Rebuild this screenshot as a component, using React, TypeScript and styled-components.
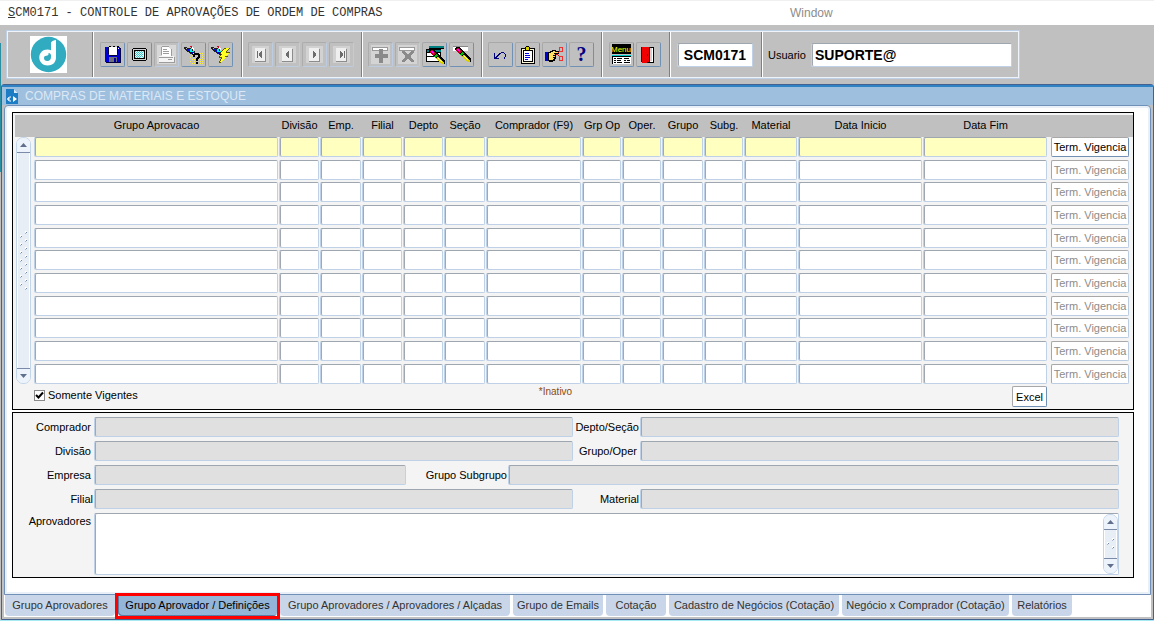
import React from "react";
import styled, { createGlobalStyle } from "styled-components";

const GlobalStyle = createGlobalStyle`
  * { box-sizing: border-box; }
  body {
    margin: 0;
    background: #a6e9f1;
    font-family: "Liberation Sans", Arial, sans-serif;
    font-size: 11px;
    color: #000;
  }
  input, button, textarea { font: inherit; color: inherit; margin: 0; }
`;

const MenuBar = styled.header`
  display: grid;
  grid-template-columns: 782fr 364fr;
  align-items: center;
  height: 25px;
  padding-left: 8px;
  border-top: 1px solid #f0f0f0;
  background: #fff;
`;

const AppTitle = styled.h1`
  margin: 0;
  font: 12px/16px "Liberation Mono", "Courier New", monospace;
  color: #333;
  white-space: nowrap;
`;

const MenuButton = styled.button`
  justify-self: start;
  border: 0;
  padding: 0;
  background: none;
  font-size: 12px;
  line-height: 16px;
  color: #8c8c8c;
`;

const Desktop = styled.main`
  padding: 5px 0 0 1px;
  background: linear-gradient(#2b8fa3, #2b8fa3) 0 18px / 1px 129px no-repeat, #c0c0c0;
`;

const Toolbar = styled.div`
  display: flex;
  width: max-content;
  height: 49px;
  margin: 0 0 5px 5px;
  border: 1px solid #bdd0e6;
  box-shadow: inset 0 0 0 1px #eef4fa;
`;

const Group = styled.div<{ $pad: number }>`
  display: flex;
  align-items: center;
  gap: 2px;
  margin: 1px 0;
  padding: 0 ${(p) => p.$pad + 1}px 0 ${(p) => p.$pad}px;
  border-left: 1px solid #808080;
  box-shadow: inset 1px 0 #fff;
`;

const LogoCell = styled.div`
  display: flex;
  align-items: center;
  padding: 0 25px 0 23px;
`;

const Tool = styled.button`
  display: flex;
  align-items: center;
  justify-content: center;
  width: 25px;
  height: 25px;
  padding: 0;
  border: 1px solid;
  border-color: #a8a8a8 #7090b4 #7090b4 #a8a8a8;
  border-radius: 2px;
  background: #c0c0c0;
  &:disabled { border-color: #acacac #bccde2 #bccde2 #acacac; }
  svg { display: block; flex: none; }
`;

const field = `
  border: 1px solid #bfd1e7;
  border-top-color: #9ea6b0;
  border-radius: 2px;
  box-shadow: inset 1px 0 #a2a8b2;
  outline: 0;
`;

const BarInput = styled.input<{ $w: number; $center?: boolean }>`
  ${field}
  width: ${(p) => p.$w}px;
  height: 24px;
  padding: 0 3px;
  background: #fff;
  font-size: 14px;
  font-weight: bold;
  text-align: ${(p) => (p.$center ? "center" : "left")};
`;

const UserLabel = styled.label`
  width: 41px;
`;

const Frame = styled.section`
  border: 1px solid #44618f;
  border-radius: 3px 3px 0 0;
  padding: 0 2px 2px;
  background: #c0c0c0;
`;

const FrameTitle = styled.div`
  display: flex;
  align-items: center;
  gap: 6px;
  height: 20px;
  margin: 0 -2px;
  padding-left: 4px;
  border-top: 2px solid #2f82c4;
  background: #9fbfdf;
  h2 {
    margin: 0;
    font-size: 12px;
    line-height: 16px;
    font-weight: normal;
    color: #dbe8f5;
  }
`;

const Canvas = styled.div`
  display: grid;
  gap: 2px;
  padding: 6px 16px 16px 7px;
  border: 1px solid #7090b8;
  border-radius: 4px 4px 0 0;
  box-shadow: inset 0 0 0 2px #e9f0f7;
  background: #fff;
`;

const Panel = styled.section`
  min-width: 0;
  border: 1px solid #000;
  background: #f4f4f4;
`;

const GridPanel = styled(Panel)`
  padding: 2px 0 0 2px;
`;

const GridTable = styled.table`
  width: 100%;
  table-layout: fixed;
  border-collapse: collapse;
  th {
    height: 22px;
    padding: 0 0 2px;
    background: #c0c0c0;
    font-weight: normal;
    white-space: nowrap;
  }
  tbody tr { height: 23px; }
  tbody tr:nth-child(3n + 2) { height: 22px; }
  td { padding: 0 1px 0 0; vertical-align: top; }
`;

const CellInput = styled.input<{ $active: boolean }>`
  ${field}
  display: block;
  width: 100%;
  height: 20px;
  padding: 0 3px;
  background: ${(p) => (p.$active ? "#ffffc0" : "#fff")};
`;

const PushButton = styled.button`
  display: block;
  height: 20px;
  padding: 0;
  border: 1px solid;
  border-color: #a8a8a8 #7090b4 #7090b4 #a8a8a8;
  border-radius: 2px;
  background: #fff;
  white-space: nowrap;
  &:disabled { color: #8c8c8c; border-color: #a8a8a8 #bccde2 #bccde2 #a8a8a8; }
`;

const TermButton = styled(PushButton)`
  width: 78px;
  margin-left: 3px;
`;

const ExcelButton = styled(PushButton)`
  justify-self: end;
  width: 35px;
  height: 21px;
`;

const Scroll = styled.div<{ $h: number }>`
  display: flex;
  flex-direction: column;
  align-items: center;
  justify-content: space-between;
  flex: none;
  width: 15px;
  height: ${(p) => p.$h}px;
  margin-left: 1px;
  border: 1px solid #c5d5e8;
  border-radius: 7px;
  background: linear-gradient(90deg, #fff 1px, #e8eef6 1px, #e8eef6 12px, #fff 12px);
  overflow: hidden;
`;

const ScrollArrow = styled.button<{ $down?: boolean }>`
  display: flex;
  align-items: center;
  justify-content: center;
  width: 13px;
  height: 15px;
  padding: 0;
  border: 0;
  ${(p) => (p.$down ? "border-top" : "border-bottom")}: 1px solid #7a8aa8;
  background: #edf3fa;
`;

const GridFooter = styled.div`
  display: grid;
  grid-template-columns: 1fr auto 1fr;
  height: 23px;
  padding: 0 86px 0 19px;
`;

const CheckLabel = styled.label`
  display: flex;
  align-items: center;
  gap: 3px;
  height: 18px;
  input {
    appearance: none;
    width: 11px;
    height: 11px;
    border: 1px solid #8a8a8a;
    background: #fff;
  }
  input:checked {
    background: #fff url("data:image/svg+xml,%3Csvg xmlns='http://www.w3.org/2000/svg' viewBox='0 0 9 9'%3E%3Cpath d='M1 4l2.500 2.500L8 1.500' fill='none' stroke='%23000' stroke-width='2'/%3E%3C/svg%3E") center / 9px 9px no-repeat;
  }
`;

const Note = styled.span`
  padding-left: 30px;
  font-size: 10px;
  line-height: 12px;
  color: #8a4a10;
`;

const Details = styled(Panel)`
  display: grid;
  gap: 4px;
  padding: 4px 14px 2px 0;
`;

const Row = styled.div`
  display: flex;
`;

const Label = styled.label<{ $w: number; $tight?: boolean }>`
  flex: none;
  width: ${(p) => p.$w}px;
  padding-right: ${(p) => (p.$tight ? 1 : 3)}px;
  text-align: right;
  line-height: 20px;
  white-space: nowrap;
`;

const AreaLabel = styled(Label)`
  line-height: 16px;
`;

const ReadField = styled.input<{ $grow: number }>`
  ${field}
  flex: ${(p) => `${p.$grow} 1 ${p.$grow}px`};
  min-width: 0;
  height: 20px;
  background: #e0e0e0;
`;

const AreaBox = styled.div`
  ${field}
  display: flex;
  flex: 1;
  min-width: 0;
  height: 62px;
  background: #fff;
`;

const Area = styled.textarea`
  flex: 1;
  min-width: 0;
  border: 0;
  outline: 0;
  resize: none;
  background: transparent;
`;

const TabBar = styled.div`
  display: flex;
  gap: 3px;
  height: 22px;
  padding-left: 1px;
  background: #fff;
`;

const Tab = styled.button<{ $w: number; $on: boolean }>`
  position: relative;
  flex: 0 1 ${(p) => p.$w}px;
  height: 21px;
  padding: 0 0 2px;
  border: 0;
  border-radius: 0 0 4px 4px;
  background: ${(p) => (p.$on ? "#93b5d8" : "#c9d6e9")};
  color: ${(p) => (p.$on ? "#000" : "#333")};
  box-shadow: ${(p) => (p.$on ? "inset 1px -1px #5c7ca6" : "none")};
  white-space: nowrap;
  &::after {
    content: "";
    display: ${(p) => (p.$on ? "block" : "none")};
    position: absolute;
    inset: -2px -3px -3px;
    border: 3px solid #f00;
  }
`;

const Svg = ({ w = 19, h = 19, children }: { w?: number; h?: number; children: React.ReactNode }) => (
  <svg width={w} height={h} viewBox={`0 0 ${w} ${h}`} shapeRendering="crispEdges" aria-hidden="true">
    {children}
  </svg>
);

const HelpMark = styled.span`
  font: bold 20px/23px "Liberation Serif", "Times New Roman", serif;
  color: #000080;
`;

const Logo = () => (
  <svg width="37" height="37" viewBox="0 0 37 37" role="img" aria-label="Logo">
    <rect width="37" height="37" fill="#fff" />
    <circle cx="18.500" cy="18.500" r="17.700" fill="#30abc0" />
    <path d="M21 6.500c1-1.600 3-2.500 5-2.500v17.500c0 5-3.500 8-8.300 8S9.300 26 9.300 21.500s3.500-8 8-8c1.500 0 2.700.3 3.700.8z" fill="#fff" />
    <path d="M18.500 17c1.500 0 2.500 1 2.500 2.500v1.500c0 2.500-1.500 4-3.700 4-2 0-3.300-1.300-3.300-3 0-1.500 1-2.300 2.300-2.300 1.800 0 2.500-1 2.200-2.700z" fill="#30abc0" />
  </svg>
);

const Torch = () => (
  <>
    <path d="M0 2h3v1h-1v1h-2zM1 4h2v-1h4v1h2v2h2v3h-1v1h-2v-1h-2v-1h-1v-1h-2v-1h-1v-1h-1z" fill="#202020" />
    <path d="M3 4h2v1h1v2h-1v-1h-1v-1h-1z" fill="#00f" />
    <path d="M6 4h2v2h2v1h-2v2h-1v-2h-1z" fill="#00f0f0" />
    <path d="M7 7h2v2h-2z" fill="#0000c8" />
    <path d="M6 1h2v2h-1v-1h-1z" fill="#e00020" />
    <path d="M8 2h1v1h1v2h-1v-1h-1zM9 8h1v1h-1z" fill="#fff" />
  </>
);

const Pencil = () => (
  <>
    <path d="M4 2h4v1h1v1h1v1h1v1h1v1h1v1h1v1h1v1h1v1h1v1h1v1h1v4h-4v-1h-1v-1h-1v-1h-1v-1h-1v-1h-1v-1h-1v-1h-1v-1h-1v-1h-1v-1h-1v-1h-1v-1h-1v-1h-1z" fill="#000" />
    <path d="M5 3h2v1h1v1h1v1h1v1h-1v1h-1v1h-1v-1h-1v-1h-1v-1h-1v-2h1z" fill="#c00020" />
    <path d="M5 4h2v1h1v2h-1v-1h-1v-1h-1z" fill="#f0f" />
    <path d="M10 7h1v1h1v1h-1v1h-1v1h-1v-1h-1v-1h1v-1h1z" fill="#00c000" />
    <path d="M12 10h1v1h1v1h1v1h1v1h1v1h1v2h-3v-1h-1v-1h-1v-1h-1v-1h-1v-1h-1v-1h1v-1h1z" fill="#d8d000" />
    <path d="M12 11h1v1h1v1h1v1h1v1h-1v-1h-1v-1h-1v-1h-1z" fill="#ffff90" />
  </>
);

const icons: Record<string, React.ReactNode> = {
  Salvar: (
    <Svg w={16} h={17}>
      <path d="M0 1h15v1h1v15h-15v-1h-1z" fill="#0000d8" />
      <path d="M4 1h8v8h-8z" fill="#fff" />
      <path d="M3 1h1v7h-1zM12 1h1v7h-1zM4 9h8v1h-8zM15 2h1v15h-15v-1h14z" fill="#000040" />
      <path d="M4 0h2v1h-2zM8 0h2v1h-2zM12 0h2v1h-2z" fill="#000" />
      <path d="M4 11h8v5h-8z" fill="#707078" />
      <path d="M9 12h2v4h-2z" fill="#0000a0" />
      <path d="M13 2h1v1h-1z" fill="#fff" />
    </Svg>
  ),
  Tela: (
    <Svg w={15} h={13}>
      <path d="M1 0h13v1h1v11h-1v1h-13v-1h-1v-11h1z" fill="#000" />
      <path d="M1 1h13v11h-13z" fill="#d0d0d0" />
      <path d="M2 2h11v9h-11z" fill="#000" />
      <path d="M3 3h9v7h-9z" fill="#d8ffff" />
      <path d="M3 3h1v1h-1zM5 3h1v1h-1zM7 3h1v1h-1zM9 3h1v1h-1zM11 3h1v1h-1zM4 4h1v1h-1zM6 4h1v1h-1zM8 4h1v1h-1zM10 4h1v1h-1zM3 5h1v1h-1zM5 5h1v1h-1zM7 5h1v1h-1zM9 5h1v1h-1zM4 6h1v1h-1zM6 6h1v1h-1zM8 6h1v1h-1zM10 6h1v1h-1zM3 7h1v1h-1zM5 7h1v1h-1zM7 7h1v1h-1zM9 7h1v1h-1zM4 8h1v1h-1zM6 8h1v1h-1zM8 8h1v1h-1zM10 8h1v1h-1zM3 9h1v1h-1zM5 9h1v1h-1zM7 9h1v1h-1zM11 9h1v1h-1z" fill="#4cc4c4" />
    </Svg>
  ),
  Imprimir: (
    <Svg>
      <rect width="19" height="19" fill="#d8d8d8" />
      <path d="M5 2h7v1h1v1h1v7h-9z" fill="#fff" />
      <path d="M4 2h1v8h-1zM5 1h7v1h-7zM6 4h4v1h-4zM6 6h6v1h-6zM6 8h6v1h-6zM14 4h1v7h-1z" fill="#9c9c9c" />
      <path d="M2 11h15v2h1v4h-16z" fill="#f4f4f4" />
      <path d="M2 12h14v1h-14zM2 17h16v1h-16zM11 14h4v1h-4zM17 12h1v5h-1z" fill="#9c9c9c" />
    </Svg>
  ),
  "Entrar Consulta": (
    <Svg w={20} h={20}>
      <Torch />
      <path d="M6 12h1v1h-1zM6 16h1v1h-1zM8 10h1v1h-1zM8 14h1v1h-1zM8 18h1v1h-1zM16 8h1v1h-1zM18 10h1v1h-1zM16 14h1v1h-1zM18 12h1v1h-1zM18 14h1v1h-1zM16 16h1v1h-1zM18 18h1v1h-1zM10 18h1v1h-1zM10 14h1v1h-1zM10 16h1v1h-1zM18 16h1v1h-1zM16 18h1v1h-1zM18 8h1v1h-1z" fill="#fff040" />
      <path d="M9 9h1v-1h5v1h1v4h-1v1h-1v2h-2v-3h1v-1h1v-2h-3v2h-2zM12 17h2v2h-2z" fill="#000" />
    </Svg>
  ),
  "Executar Consulta": (
    <Svg w={20} h={20}>
      <Torch />
      <path d="M15 3h4v1h-1v1h-1v1h-1v1h3v1h-1v1h-1v1h-1v1h1v1h-2v1h-1v1h-1v1h-1v1h-1v1h-1v1h-2v-2h1v-2h1v-1h-2v-2h1v-1h1v-1h-1v-1h1v-2h1v-1h1v-1h1v-1h1z" fill="#605800" />
      <path d="M15 3h3v1h-1v1h-1v1h-1v2h3v1h-1v1h-1v1h-2v1h1v1h-1v1h-1v1h-1v1h-1v1h-2v-1h1v-2h1v-2h-2v-1h1v-1h1v-1h-1v-2h1v-1h1v-1h1v-1h1z" fill="#ffff20" />
    </Svg>
  ),
  Inserir: (
    <Svg>
      <rect width="19" height="19" fill="#d4d4d4" />
      <path d="M1 2h15v3h-15z" fill="#fff" stroke="#999" />
      <path d="M8 4h4v5h5v4h-5v5h-4v-5h-4v-4h4z" fill="#8a8a8a" />
    </Svg>
  ),
  Remover: (
    <Svg>
      <rect width="19" height="19" fill="#d4d4d4" />
      <path d="M1 2h15v3h-15z" fill="#fff" stroke="#999" />
      <path d="M4 6h3v1h1v1h1v1h2v-1h1v-1h1v-1h3v2h-1v1h-1v1h-1v3h1v1h1v1h1v2h-3v-1h-1v-1h-1v-1h-2v1h-1v1h-1v1h-3v-2h1v-1h1v-1h1v-3h-1v-1h-1v-1h-1z" fill="#8a8a8a" />
    </Svg>
  ),
  "Limpar Bloco": (
    <Svg w={20} h={20}>
      <path d="M4 1h15v2h-15z" fill="#008080" />
      <path d="M4 3h15v1h-15zM1 4h15v13h-15z" fill="#000" />
      <path d="M2 5h14v2h-14z" fill="#008080" />
      <path d="M2 8h13v3h-13zM2 12h13v4h-13z" fill="#fff" />
      <g transform="translate(1 2)"><Pencil /></g>
    </Svg>
  ),
  "Limpar Registro": (
    <Svg w={20} h={20}>
      <path d="M1 2h15v4h-15z" fill="#fff" />
      <path d="M1 1h15v1h-15z" fill="#888" />
      <Pencil />
    </Svg>
  ),
  Desfazer: (
    <Svg w={15} h={12}>
      <path d="M1 4h1v4h1v-1h1v-1h1v-1h1v-1h2v-1h3v1h1v1h1v3h-1v2h-1v-2h1v-3h-1v-1h-3v1h-1v1h-1v1h-1v1h-1v1h2v1h-5z" fill="#000080" />
    </Svg>
  ),
  Colar: (
    <Svg w={17} h={18}>
      <path d="M2 2h13v15h-13z" fill="#fff8d8" stroke="#000" />
      <path d="M4 4h9v11h-9z" fill="#fff" stroke="#000" />
      <path d="M6 1h1v-1h3v1h1v3h-5z" fill="#d8d000" />
      <path d="M5 4h7v1h-7zM6 1h1v3h-1zM10 1h1v3h-1zM7 0h3v1h-3z" fill="#000" />
      <path d="M6 7h4v1h-4zM6 9h5v1h-5zM6 11h5v1h-5zM6 13h3v1h-3z" fill="#00e" />
    </Svg>
  ),
  Recortar: (
    <Svg w={19} h={17}>
      <path d="M0 6h3v9h-3z" fill="#0000d0" />
      <path d="M3 6h2v-1h2v-1h4v1h3v3h-3v5h-1v2h-2v1h-4v-1h-1z" fill="#000" />
      <path d="M4 7h2v-1h2v-1h2v1h3v1h-4v1h1v1h-2v1h2v1h-2v1h1v1h-1v1h-4z" fill="#ffe060" />
      <path d="M11 8h2v1h1v1h1v1h-1v-1h-1v-1h-2zM13 6h1v-1h1v1h-1v1h-1z" fill="#e00000" />
      <path d="M14 1h3v4h-3zM14 10h3v4h-3z" fill="none" stroke="#f03030" />
    </Svg>
  ),
  Ajuda: <HelpMark>?</HelpMark>,
  Menu: (
    <svg width="21" height="21" viewBox="0 0 21 21" shapeRendering="crispEdges" aria-hidden="true">
      <path d="M1 0h19v10h-19z" fill="#000" />
      <text x="10" y="8" textAnchor="middle" fontFamily="Liberation Sans, sans-serif" fontSize="8" fill="#ff0">Menu</text>
      <path d="M1 11h19v9h-19z" fill="#000" />
      <path d="M1 11h19v1h-19z" fill="#0cc" />
      <path d="M2 13h18v7h-18z" fill="#fff" />
      <path d="M3 14h2v1h-2zM6 14h5v1h-5zM13 14h5v1h-5zM3 16h2v1h-2zM6 16h4v1h-4zM13 16h2v1h-2zM16 16h3v1h-3zM3 18h2v1h-2zM6 18h5v1h-5zM13 18h6v1h-6z" fill="#000" />
    </svg>
  ),
  Sair: (
    <Svg w={17} h={18}>
      <path d="M3 1h10v15h-10z" fill="#fff" stroke="#000" />
      <path d="M10 2h2v13h-2z" fill="#d0d0d0" />
      <path d="M2 1h7v15h-2v1h-5z" fill="#f00000" />
      <path d="M9 2h1v14h-1zM7 8h1v2h-1zM1 1h1v15h-1z" fill="#600000" />
    </Svg>
  ),
};

const NavIcon = ({ dir, end }: { dir: "left" | "right"; end?: boolean }) => (
  <Svg w={17} h={17}>
    <rect width="17" height="17" fill="#d2d2d2" />
    <path d="M3 2h10v13h-10z" fill="#efefef" />
    <path d="M13 3h1v13h-11v-1h10z" fill="#8c8c8c" />
    <g transform={dir === "right" ? "translate(17 0) scale(-1 1)" : undefined}>
      <path d="M10 5v7h-1v-1h-1v-1h-1v-3h1v-1h1v-1z" fill="#6c6c6c" />
      {end && <path d="M5 5h1v7h-1z" fill="#6c6c6c" />}
    </g>
  </Svg>
);

const ToolButton = ({ name, disabled }: { name: string; disabled?: boolean }) => (
  <Tool type="button" aria-label={name} disabled={disabled}>{icons[name]}</Tool>
);

const Arrow = ({ down }: { down?: boolean }) => (
  <svg width="7" height="4" viewBox="0 0 7 4" aria-hidden="true">
    <path d={down ? "M0 0h7L3.500 4z" : "M0 4h7L3.500 0z"} fill="#5f6f8c" />
  </svg>
);

const Grip = ({ rows }: { rows: number }) => (
  <svg width="9" height={rows * 4} viewBox={`0 0 9 ${rows * 4}`} shapeRendering="crispEdges" aria-hidden="true">
    {Array.from({ length: rows }, (_, i) => {
      const x = i % 2 ? 1 : 6;
      return (
        <g key={i}>
          <rect x={x} y={i * 4} width="2" height="2" fill="#fff" />
          <rect x={x + 1} y={i * 4 + 1} width="1" height="1" fill="#6f88ac" />
          <rect x={x} y={i * 4 + 2} width="1" height="1" fill="#a5b8d0" />
        </g>
      );
    })}
  </svg>
);

const ScrollBar = ({ height, grips }: { height: number; grips: number }) => (
  <Scroll $h={height}>
    <ScrollArrow type="button" aria-label="Acima"><Arrow /></ScrollArrow>
    <Grip rows={grips} />
    <ScrollArrow type="button" aria-label="Abaixo" $down><Arrow down /></ScrollArrow>
  </Scroll>
);

const columns: [string, number?][] = [
  ["Grupo Aprovacao"], ["Divisão", 41], ["Emp.", 42], ["Filial", 41], ["Depto", 41], ["Seção", 42],
  ["Comprador (F9)", 96], ["Grp Op", 40], ["Oper.", 40], ["Grupo", 42], ["Subg.", 40], ["Material", 54],
  ["Data Inicio", 125], ["Data Fim", 125],
];

const tabs: [string, number][] = [
  ["Grupo Aprovadores", 110], ["Grupo Aprovador / Definições", 159], ["Grupo Aprovadores / Aprovadores / Alçadas", 230],
  ["Grupo de Emails", 90], ["Cotação", 60], ["Cadastro de Negócios (Cotação)", 170],
  ["Negócio x Comprador (Cotação)", 167], ["Relatórios", 60],
];

type Item = { id: string; label: string; lw: number; grow: number; tight?: boolean };
const details: Item[][] = [
  [{ id: "comprador", label: "Comprador", lw: 81, grow: 479 }, { id: "depto", label: "Depto/Seção", lw: 67, grow: 479, tight: true }],
  [{ id: "divisao", label: "Divisão", lw: 81, grow: 479 }, { id: "oper", label: "Grupo/Oper", lw: 67, grow: 479 }],
  [{ id: "empresa", label: "Empresa", lw: 81, grow: 312 }, { id: "subgrupo", label: "Grupo Subgrupo", lw: 102, grow: 611, tight: true }],
  [{ id: "filial", label: "Filial", lw: 81, grow: 479, tight: true }, { id: "material", label: "Material", lw: 67, grow: 479, tight: true }],
];

const rows = Array.from({ length: 11 }, (_, i) => i);

export default function App() {
  return (
    <>
      <GlobalStyle />
      <MenuBar>
        <AppTitle><u>S</u>CM0171 - CONTROLE DE APROVAÇÕES DE ORDEM DE COMPRAS</AppTitle>
        <MenuButton type="button">Window</MenuButton>
      </MenuBar>
      <Desktop>
        <Toolbar role="toolbar">
          <LogoCell><Logo /></LogoCell>
          <Group $pad={7}>
            <ToolButton name="Salvar" />
            <ToolButton name="Tela" />
            <ToolButton name="Imprimir" disabled />
            <ToolButton name="Entrar Consulta" />
            <ToolButton name="Executar Consulta" />
          </Group>
          <Group $pad={6}>
            <Tool type="button" aria-label="Primeiro" disabled><NavIcon dir="left" end /></Tool>
            <Tool type="button" aria-label="Anterior" disabled><NavIcon dir="left" /></Tool>
            <Tool type="button" aria-label="Próximo" disabled><NavIcon dir="right" /></Tool>
            <Tool type="button" aria-label="Último" disabled><NavIcon dir="right" end /></Tool>
          </Group>
          <Group $pad={6}>
            <ToolButton name="Inserir" disabled />
            <ToolButton name="Remover" disabled />
            <ToolButton name="Limpar Bloco" />
            <ToolButton name="Limpar Registro" />
          </Group>
          <Group $pad={6}>
            <ToolButton name="Desfazer" />
            <ToolButton name="Colar" />
            <ToolButton name="Recortar" />
            <ToolButton name="Ajuda" />
          </Group>
          <Group $pad={7}>
            <ToolButton name="Menu" />
            <ToolButton name="Sair" />
          </Group>
          <Group $pad={7}>
            <BarInput $w={76} $center aria-label="Programa" defaultValue="SCM0171" />
          </Group>
          <Group $pad={6}>
            <UserLabel htmlFor="usuario">Usuario</UserLabel>
            <BarInput $w={201} id="usuario" defaultValue="SUPORTE@" />
          </Group>
        </Toolbar>
        <Frame>
          <FrameTitle>
            <svg width="13" height="15" viewBox="0 0 13 15" aria-hidden="true">
              <path d="M0 0h8l4 4v11H0z" fill="#1c7cc4" />
              <path d="M8 0v4h4z" fill="#d8eaf8" />
              <path d="M5 8H4a2 2 0 0 0-2 2 2 2 0 0 0 2 2h1M1 10h3" fill="none" stroke="#fff" />
              <path d="M7 7l4 3-4 3z" fill="#fff" />
            </svg>
            <h2>COMPRAS DE MATERIAIS E ESTOQUE</h2>
          </FrameTitle>
          <Canvas>
            <GridPanel>
              <GridTable>
                <colgroup>
                  <col width={19} />
                  {columns.map(([name, w]) => <col key={name} width={w} />)}
                  <col width={85} />
                </colgroup>
                <thead>
                  <tr>
                    <th />
                    {columns.map(([name]) => <th key={name} scope="col">{name}</th>)}
                    <th />
                  </tr>
                </thead>
                <tbody>
                  {rows.map((r) => (
                    <tr key={r}>
                      {r === 0 && <td rowSpan={11}><ScrollBar height={247} grips={15} /></td>}
                      {columns.map(([name]) => (
                        <td key={name}><CellInput $active={r === 0} aria-label={`${name} ${r + 1}`} /></td>
                      ))}
                      <td><TermButton type="button" disabled={r > 0}>Term. Vigencia</TermButton></td>
                    </tr>
                  ))}
                </tbody>
              </GridTable>
              <GridFooter>
                <CheckLabel><input type="checkbox" defaultChecked />Somente Vigentes</CheckLabel>
                <Note>*Inativo</Note>
                <ExcelButton type="button">Excel</ExcelButton>
              </GridFooter>
            </GridPanel>
            <Details>
              {details.map((items) => (
                <Row key={items[0].id}>
                  {items.map((f) => (
                    <React.Fragment key={f.id}>
                      <Label htmlFor={f.id} $w={f.lw} $tight={f.tight}>{f.label}</Label>
                      <ReadField id={f.id} $grow={f.grow} readOnly />
                    </React.Fragment>
                  ))}
                </Row>
              ))}
              <Row>
                <AreaLabel htmlFor="aprovadores" $w={81}>Aprovadores</AreaLabel>
                <AreaBox>
                  <Area id="aprovadores" />
                  <ScrollBar height={60} grips={3} />
                </AreaBox>
              </Row>
            </Details>
          </Canvas>
          <TabBar role="tablist">
            {tabs.map(([name, w], i) => (
              <Tab key={name} type="button" role="tab" aria-selected={i === 1} $w={w} $on={i === 1}>{name}</Tab>
            ))}
          </TabBar>
        </Frame>
      </Desktop>
    </>
  );
}
